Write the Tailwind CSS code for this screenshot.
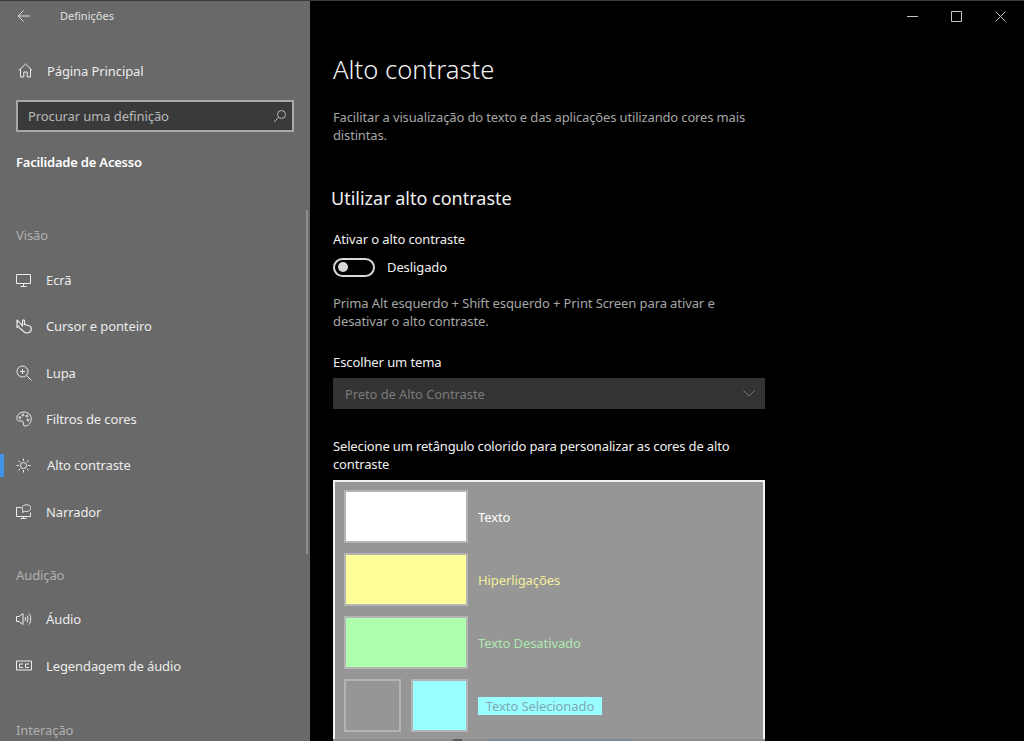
<!DOCTYPE html>
<html lang="pt">
<head>
    <meta charset="UTF-8">
    <meta name="viewport" content="width=device-width, initial-scale=1.0">
    <title>Definições</title>
    <script src="https://cdn.jsdelivr.net/npm/@tailwindcss/browser@4"></script>
</head>
<body class="bg-black h-[741px] w-[1024px] overflow-hidden font-['Noto_Sans',sans-serif] text-[13px] tracking-[-0.1px] leading-[18px]">
<div class="flex h-full border-t border-[#3a3a3a]">

  <!-- sidebar -->
  <aside class="relative w-[310px] h-full shrink-0 bg-[#696969] text-[#ececec] overflow-hidden">
    <div class="flex items-center h-[30px] pl-[17px] text-[#e0e0e0]">
      <svg class="w-[14px] h-[14px]" viewBox="0 0 14 14" fill="none" stroke="currentColor" stroke-width="1"><path d="M1 7h12M6.500 1.500 1 7l5.500 5.500"/></svg>
      <span class="ml-[29px] text-[11px] tracking-normal">Definições</span>
    </div>
    <div class="flex items-center h-[47px] mt-[16px] pl-[18px]">
      <svg class="w-[15px] h-[15px]" viewBox="0 0 15 15" fill="none" stroke="currentColor" stroke-width="1"><path d="M.8 7.500 7.500 1l6.700 6.500M2.500 6.200V14h3.300V9h3.400v5h3.300V6.200"/></svg>
      <span class="ml-[14px]">Página Principal</span>
    </div>
    <div class="flex items-center justify-between mx-[16px] mt-[6px] h-[32px] bg-[#3a3a3a] border-2 border-[#a8a8a8] pl-[10px] pr-[5px] text-[#b8b8b8]">
      <span>Procurar uma definição</span>
      <svg class="w-[14px] h-[14px]" viewBox="0 0 14 14" fill="none" stroke="currentColor" stroke-width="1"><circle cx="8.500" cy="5.500" r="4"/><path d="M5.500 8.500 1 13"/></svg>
    </div>
    <div class="mt-[21px] pl-[16px] font-semibold tracking-[-0.2px] text-white">Facilidade de Acesso</div>

    <div class="mt-[55px] pl-[16px] text-[#b0b0b0]">Visão</div>

    <nav class="mt-[13px]">
      <div class="flex items-center h-[46.300px] pl-[16px]">
        <svg class="w-[15px] h-[15px] shrink-0" viewBox="0 0 15 15" fill="none" stroke="currentColor" stroke-width="1"><path d="M.5 1.500h14v9H.5zM7.500 10.500V13M4.500 13.500h6"/></svg>
        <span class="ml-[15px]">Ecrã</span>
      </div>
      <div class="flex items-center h-[46.300px] pl-[16px]">
        <svg class="w-[16px] h-[15px] shrink-0" viewBox="0 0 16 15" fill="none" stroke="currentColor" stroke-width="1.200"><path d="M1 .8v8M1 .8l6 6.500M1 8.800l2.300-2M6.500 7V1.800a1 1 0 0 1 2 0V5.500l3.800 1c1.800.4 3 1.200 3 2.800 0 2.800-1.800 4.700-4.500 4.700-2.300 0-3.300-1-4.500-2.800L3.200 8.500"/></svg>
        <span class="ml-[14px]">Cursor e ponteiro</span>
      </div>
      <div class="flex items-center h-[46.300px] pl-[16px]">
        <svg class="w-[16px] h-[16px] shrink-0" viewBox="0 0 16 16" fill="none" stroke="currentColor" stroke-width="1"><circle cx="6.500" cy="6.500" r="5.500"/><path d="M10.500 10.500 15.500 15.500M6.500 4v5M4 6.500h5"/></svg>
        <span class="ml-[14px]">Lupa</span>
      </div>
      <div class="flex items-center h-[46.300px] pl-[16px]">
        <svg class="w-[16px] h-[16px] shrink-0" viewBox="0 0 16 16" fill="none" stroke="currentColor" stroke-width="1"><path d="M8 1C4 1 .8 3.800.8 7.500c0 1.800 1.500 2.500 3.200 2.500h2c1 0 1.500.7 1.300 1.800-.3 1.700.3 3.200 1.700 3.200 3.500 0 6.200-3.200 6.200-7C15.200 3.800 12 1 8 1z"/><circle cx="4" cy="6.500" r="1"/><circle cx="7" cy="4" r="1"/><circle cx="11" cy="5" r="1"/><circle cx="12" cy="9" r="1"/></svg>
        <span class="ml-[14px]">Filtros de cores</span>
      </div>
      <div class="relative flex items-center h-[46.300px] pl-[16px]">
        <span class="absolute left-0 top-[12px] w-[4px] h-[23px] bg-[#3f94e8]"></span>
        <svg class="w-[15px] h-[15px] shrink-0" viewBox="0 0 15 15" fill="none" stroke="currentColor" stroke-width="1"><circle cx="7.500" cy="7.500" r="3"/><path d="M7.500 .5v2.500M7.500 12v2.500M.5 7.500H3M12 7.500h2.500M2.500 2.500l1.800 1.800M10.700 10.700l1.800 1.800M2.500 12.500l1.800-1.800M10.700 4.300l1.800-1.800"/></svg>
        <span class="ml-[16px]">Alto contraste</span>
      </div>
      <div class="flex items-center h-[46.300px] pl-[16px]">
        <svg class="w-[15px] h-[15px] shrink-0" viewBox="0 0 15 15" fill="none" stroke="currentColor" stroke-width="1"><path d="M5 3.500H.5v9h14V8.500M7.500 12.500V14.500M4.500 14.500h6M6 4C6 2.200 8 .8 10.500 .8S15 2.200 15 4s-2 3.500-4.500 3.500c-.7 0-1.300-.1-1.800-.3L6.500 8.500 7 6.200C6.400 5.600 6 4.800 6 4z"/></svg>
        <span class="ml-[15px]">Narrador</span>
      </div>
    </nav>

    <div class="mt-[31.500px] pl-[16px] text-[#b0b0b0]">Audição</div>

    <nav class="mt-[12px]">
      <div class="flex items-center h-[46.300px] pl-[16px]">
        <svg class="w-[16px] h-[14px] shrink-0" viewBox="0 0 16 14" fill="none" stroke="currentColor" stroke-width="1"><path d="M.5 4.500h2.500L7 1.500v11l-4-3H.5zM9 5c.7.600.7 3.400 0 4M11 3.500c1.300 1.500 1.300 5.500 0 7M13 1.500c2.300 3 2.300 8 0 11"/></svg>
        <span class="ml-[14px]">Áudio</span>
      </div>
      <div class="flex items-center h-[46.300px] pl-[16px]">
        <svg class="w-[16px] h-[12px] shrink-0" viewBox="0 0 16 12" fill="none" stroke="currentColor" stroke-width="1"><path d="M.5 1h15v9H.5zM7 4H3.500v3.500H7M13 4H9.500v3.500H13"/></svg>
        <span class="ml-[14px]">Legendagem de áudio</span>
      </div>
    </nav>

    <div class="mt-[32px] pl-[16px] text-[#b0b0b0]">Interação</div>

    <span class="absolute right-[2px] top-[209px] w-[2px] h-[344px] bg-[#8f8f8f]"></span>
  </aside>

  <!-- content -->
  <main class="relative flex-1 h-full pl-[23px] text-white overflow-hidden">
    <div class="absolute right-[2px] top-0 flex items-center h-[31px] text-[#c4c4c4]">
      <div class="flex justify-center w-[44px]"><svg class="w-[11px] h-[11px]" viewBox="0 0 11 11" stroke="currentColor" stroke-width="1"><path d="M0 5.500h11"/></svg></div>
      <div class="flex justify-center w-[44px]"><svg class="w-[11px] h-[11px]" viewBox="0 0 11 11" fill="none" stroke="currentColor" stroke-width="1"><path d="M.5.500h10v10H.5z"/></svg></div>
      <div class="flex justify-center w-[44px]"><svg class="w-[11px] h-[11px]" viewBox="0 0 11 11" stroke="currentColor" stroke-width="1"><path d="M.5.500l10 10M10.500.500l-10 10"/></svg></div>
    </div>

    <h1 class="mt-[51px] text-[25.600px] tracking-normal leading-[36px] font-light text-[#f2f2f2]">Alto contraste</h1>
    <p class="mt-[20px] w-[432px] tracking-[-0.15px] text-[#a6a6a6]">Facilitar a visualização do texto e das aplicações utilizando cores mais distintas.</p>
    <h2 class="mt-[41px] -ml-[2px] text-[18px] tracking-normal leading-[26px] text-[#f0f0f0]">Utilizar alto contraste</h2>

    <div class="mt-[19px] text-[#f0f0f0]">Ativar o alto contraste</div>
    <div class="flex items-center mt-[9px] h-[20px]">
      <div class="flex items-center w-[42px] h-[19px] rounded-full border-2 border-[#d8d8d8] pl-[3px]">
        <span class="w-[10px] h-[10px] rounded-full bg-[#d8d8d8]"></span>
      </div>
      <span class="ml-[12px] text-[#f0f0f0]">Desligado</span>
    </div>

    <p class="mt-[17px] w-[432px] text-[#a6a6a6]">Prima Alt esquerdo + Shift esquerdo + Print Screen para ativar e desativar o alto contraste.</p>

    <div class="mt-[23px] text-[#f0f0f0]">Escolher um tema</div>
    <div class="flex items-center justify-between mt-[7px] w-[432px] h-[31px] bg-[#333333] pl-[12px] pr-[10px] text-[#7a7a7a]">
      <span>Preto de Alto Contraste</span>
      <svg class="w-[12px] h-[7px]" viewBox="0 0 12 7" fill="none" stroke="currentColor" stroke-width="1"><path d="M.5.500 6 6l5.500-5.500"/></svg>
    </div>

    <p class="mt-[28px] w-[432px] tracking-[-0.15px] text-[#f0f0f0]">Selecione um retângulo colorido para personalizar as cores de alto contraste</p>

    <div class="mt-[7px] w-[432px] h-[280px] bg-[#969696] border-2 border-[#f2f2f2] pl-[9px] pt-[8px] flex flex-col gap-[10px]">
      <div class="flex items-center h-[53px]">
        <div class="w-[124px] h-full bg-white border-2 border-[#b4b4b4]"></div>
        <span class="ml-[10px] text-white">Texto</span>
      </div>
      <div class="flex items-center h-[53px]">
        <div class="w-[124px] h-full bg-[#ffff99] border-2 border-[#b4b4b4]"></div>
        <span class="ml-[10px] text-[#f5ee9a]">Hiperligações</span>
      </div>
      <div class="flex items-center h-[53px]">
        <div class="w-[124px] h-full bg-[#aeffae] border-2 border-[#b4b4b4]"></div>
        <span class="ml-[10px] text-[#aee8ae]">Texto Desativado</span>
      </div>
      <div class="flex items-center h-[53px]">
        <div class="w-[57px] h-full bg-[#969696] border-2 border-[#b4b4b4]"></div>
        <div class="ml-[10px] w-[57px] h-full bg-[#99ffff] border-2 border-[#b4b4b4]"></div>
        <span class="ml-[10px] mt-[1px] w-[124px] h-[18px] bg-[#99ffff] text-center text-[#7fa8b5]">Texto Selecionado</span>
      </div>
    </div>

    <!-- cut-off top edge of the next row at the very bottom -->
    <div class="absolute left-[23px] bottom-0 flex w-[432px] h-[2px] bg-[#8c8c8c]">
      <span class="ml-[120px] w-[9px] bg-[#5a5a5a]"></span>
      <span class="ml-[25px] w-[143px] bg-[#7d8a94]"></span>
    </div>
  </main>
</div>
</body>
</html>
